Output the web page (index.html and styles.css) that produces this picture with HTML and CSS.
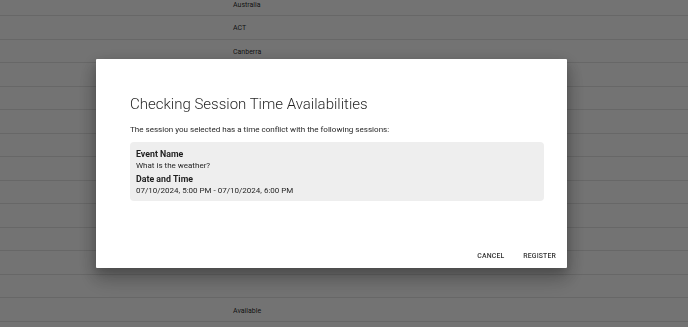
FILE: index.html
```html
<!DOCTYPE html>
<html lang="en">
<head>
<meta charset="utf-8">
<title>Checking Session Time Availabilities</title>
<link rel="stylesheet" href="styles.css">
</head>
<body>
<div class="page">
  <div class="list">
    <div class="row"><span class="cell">Australia</span></div>
    <div class="row"><span class="cell">ACT</span></div>
    <div class="row"><span class="cell">Canberra</span></div>
    <div class="row"><span class="cell"></span></div>
    <div class="row"><span class="cell"></span></div>
    <div class="row"><span class="cell"></span></div>
    <div class="row"><span class="cell"></span></div>
    <div class="row"><span class="cell"></span></div>
    <div class="row"><span class="cell"></span></div>
    <div class="row"><span class="cell"></span></div>
    <div class="row"><span class="cell"></span></div>
    <div class="row"><span class="cell"></span></div>
    <div class="row"><span class="cell"></span></div>
    <div class="row"><span class="cell">Available</span></div>
  </div>
</div>
<div class="backdrop">
  <div class="dialog" role="dialog">
    <div class="dialog-body">
      <h2 class="dialog-title">Checking Session Time Availabilities</h2>
      <p class="dialog-text">The session you selected has a time conflict with the following sessions:</p>
      <div class="conflict">
        <div class="conflict-label">Event Name</div>
        <div class="conflict-value">What is the weather?</div>
        <div class="conflict-label">Date and Time</div>
        <div class="conflict-value">07/10/2024, 5:00 PM - 07/10/2024, 6:00 PM</div>
      </div>
    </div>
    <div class="actions">
      <button class="btn">Cancel</button>
      <button class="btn">Register</button>
    </div>
  </div>
</div>
</body>
</html>
```
FILE: styles.css
```css
html, body {
  margin: 0;
  padding: 0;
  height: 100%;
  overflow: hidden;
}
body {
  background: #ffffff;
  font-family: Roboto, "Liberation Sans", Arial, sans-serif;
  color: rgba(0, 0, 0, 0.87);
}
.page {
  height: 100%;
}
.list {
  margin-top: -7.5px;
}
.row {
  box-sizing: border-box;
  height: 23.54px;
  border-bottom: 1px solid rgba(0, 0, 0, 0.1);
  display: flex;
  align-items: center;
  padding-left: 233px;
  padding-top: 3px;
}
.cell {
  font-size: 7px;
  line-height: 1;
}
.backdrop {
  position: fixed;
  inset: 0;
  background: rgba(0, 0, 0, 0.55);
  display: flex;
  align-items: center;
  justify-content: center;
  padding-right: 25px;
}
.dialog {
  box-sizing: border-box;
  width: 471px;
  height: 209px;
  background: #ffffff;
  border-radius: 1px;
  box-shadow: 0 6px 18px 2px rgba(0, 0, 0, 0.2), 0 12px 22px 2px rgba(0, 0, 0, 0.14), 0 4px 8px rgba(0, 0, 0, 0.12);
  display: flex;
  flex-direction: column;
}
.dialog-body {
  padding: 36px 23px 0 34px;
}
.dialog-title {
  margin: 0;
  font-size: 15px;
  font-weight: 300;
  line-height: 19px;
  color: rgba(0, 0, 0, 0.87);
}
.dialog-text {
  margin: 10px 0 0;
  font-size: 8.05px;
  line-height: 12px;
}
.conflict {
  margin-top: 6px;
  background: #eeeeee;
  border-radius: 4px;
  padding: 6px 6px 4px;
}
.conflict-label {
  font-size: 8.8px;
  font-weight: 700;
  line-height: 12.3px;
}
.conflict-value {
  font-size: 8px;
  line-height: 12.3px;
}
.actions {
  margin-top: auto;
  display: flex;
  justify-content: flex-end;
  gap: 7px;
  padding: 4px 5px 2px 0;
}
.btn {
  font-family: Roboto, "Liberation Sans", Arial, sans-serif;
  font-size: 6.9px;
  font-weight: 500;
  letter-spacing: 0.15px;
  text-transform: uppercase;
  color: rgba(0, 0, 0, 0.82);
  background: transparent;
  border: 0;
  padding: 4px 6px;
  line-height: 12px;
}
```
